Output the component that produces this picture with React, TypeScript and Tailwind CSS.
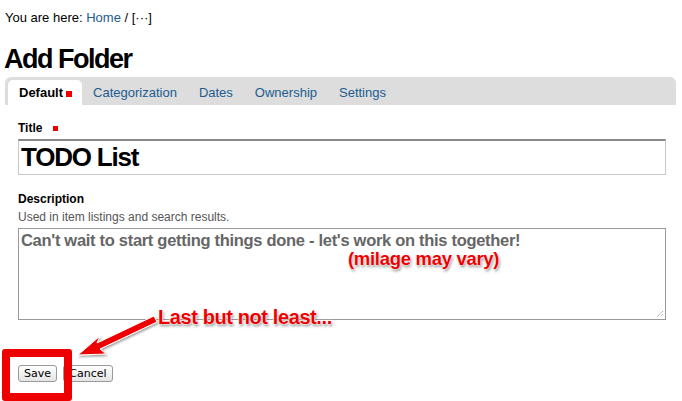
import React from "react";

const tabs = ["Default", "Categorization", "Dates", "Ownership", "Settings"];

const outline =
  "[text-shadow:0_0_2px_#fff,0_0_2px_#fff,0_0_1px_#fff,1px_2px_3px_rgba(0,0,0,0.5)]";

const App = () => {
  return (
    <div className="relative w-[682px] h-[401px] overflow-hidden bg-white font-['Liberation_Sans',Arial,sans-serif] text-black">
      {/* breadcrumb */}
      <div className="pl-[5px] pt-[10px] text-[13px] leading-[16px]">
        You are here: <span className="text-[#205c90]">Home</span> / [···]
      </div>

      <h1 className="pl-[4px] mt-[18px] text-[27px] leading-[30px] font-bold tracking-[-1.5px]">
        Add Folder
      </h1>

      {/* tabs */}
      <div className="ml-[5px] mr-[6px] mt-[3px] h-[28px] bg-[#dddddd] rounded-t-[6px] flex items-end pl-[3px]">
        {tabs.map((t, i) => (
          <div
            key={t}
            className={
              i === 0
                ? "h-[25px] bg-white rounded-t-[5px] pl-[11px] pr-[10px] flex items-center text-[13px] font-bold"
                : "h-[25px] px-[11px] flex items-center text-[13px] text-[#205c90]"
            }
          >
            {t}
            {i === 0 && <span className="ml-[3px] mt-[2px] w-[6px] h-[6px] bg-[#ee0000]" />}
          </div>
        ))}
      </div>

      {/* form */}
      <div className="pl-[18px] pr-[16px]">
        <div className="mt-[16px] flex items-center text-[12px] font-bold leading-[14px]">
          Title
          <span className="ml-[11px] w-[5px] h-[5px] bg-[#ee0000]" />
        </div>
        <div className="mt-[4px] h-[36px] border border-[#c8c8c8] border-t-[2px] border-t-[#888] flex items-center pl-[2px] text-[26px] font-bold tracking-[-1.2px]">
          TODO List
        </div>

        <div className="mt-[17px] text-[12px] font-bold leading-[14px]">Description</div>
        <div className="mt-[4px] text-[12px] text-[#555] leading-[14px]">
          Used in item listings and search results.
        </div>
        <div className="relative mt-[4px] h-[92px] border border-[#999] pl-[2px] pt-[1px] text-[16.5px] font-bold text-[#666] leading-[20px] tracking-[-0.3px]">
          Can't wait to start getting things done - let's work on this together!
          <svg className="absolute right-[1px] bottom-[1px]" width="9" height="9" viewBox="0 0 9 9">
            <path d="M8 2 L2 8 M8 5 L5 8" stroke="#888" strokeWidth="1" strokeDasharray="1 1" />
          </svg>
        </div>

        <div className="mt-[45px] flex gap-[6px] font-['DejaVu_Sans',sans-serif] text-[11px]">
          <button className="w-[39px] h-[17px] rounded-[3px] border border-[#9a9a9a] bg-gradient-to-b from-white to-[#e4e4e4] leading-[15px]">
            Save
          </button>
          <button className="w-[50px] h-[17px] rounded-[3px] border border-[#9a9a9a] bg-gradient-to-b from-white to-[#e4e4e4] leading-[15px]">
            Cancel
          </button>
        </div>
      </div>

      {/* annotations */}
      <div className="absolute left-[2px] top-[349px] w-[70px] h-[52px] border-[8px] border-[#ee0000] rounded-[3px]" />
      <svg className="absolute left-0 top-0" width="682" height="401" viewBox="0 0 682 401">
        <defs>
          <filter id="sh" x="-20%" y="-20%" width="140%" height="140%">
            <feDropShadow dx="1" dy="1.5" stdDeviation="1" floodColor="#000" floodOpacity="0.4" />
          </filter>
        </defs>
        <path
          d="M154 316 L97 343 L100 336 L78 355 L106 354 L100 349 L157 322 Z"
          fill="#ee0000"
          stroke="#fff"
          strokeWidth="1"
          filter="url(#sh)"
        />
      </svg>
      <div
        className={`absolute left-[348px] top-[245px] text-[18.5px] font-bold text-[#e00] tracking-[-0.3px] ${outline}`}
      >
        (milage may vary)
      </div>
      <div
        className={`absolute left-[158px] top-[302px] text-[20px] font-bold text-[#e00] tracking-[-0.4px] ${outline}`}
      >
        Last but not least...
      </div>
    </div>
  );
};

export default App;
